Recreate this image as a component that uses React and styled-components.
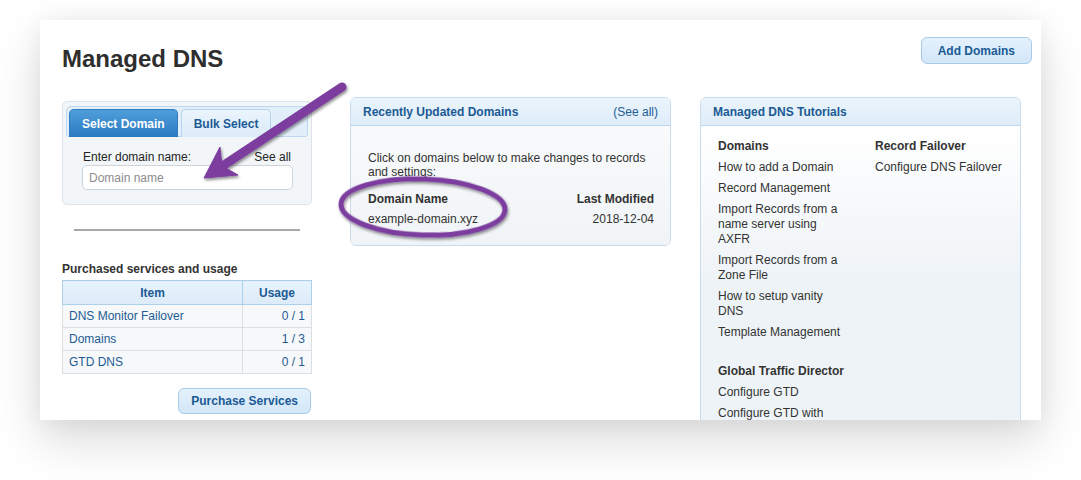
import styled, { createGlobalStyle } from "styled-components";

const GlobalStyle = createGlobalStyle`
  html, body {
    margin: 0;
    padding: 0;
    background: #ffffff;
  }
  body {
    font-family: "Liberation Sans", Arial, Helvetica, sans-serif;
    font-size: 12px;
    color: #333333;
  }
`;

const services = [
  { item: "DNS Monitor Failover", usage: "0 / 1" },
  { item: "Domains", usage: "1 / 3" },
  { item: "GTD DNS", usage: "0 / 1" },
];

const tutorialsLeft = [
  {
    title: "Domains",
    links: [
      "How to add a Domain",
      "Record Management",
      "Import Records from a name server using AXFR",
      "Import Records from a Zone File",
      "How to setup vanity DNS",
      "Template Management",
    ],
  },
  {
    title: "Global Traffic Director",
    links: ["Configure GTD", "Configure GTD with"],
  },
];

const tutorialsRight = [
  { title: "Record Failover", links: ["Configure DNS Failover"] },
];

function TutorialGroups({ groups }) {
  return groups.map((g) => (
    <TutorialGroup key={g.title}>
      <GroupTitle>{g.title}</GroupTitle>
      {g.links.map((l) => (
        <TutorialLink key={l}>{l}</TutorialLink>
      ))}
    </TutorialGroup>
  ));
}

function Annotations() {
  return (
    <Overlay viewBox="40 20 1001 400" width="1001" height="400">
      <defs>
        <filter id="shade" x="-20%" y="-20%" width="140%" height="140%">
          <feDropShadow dx="1" dy="2" stdDeviation="1.4" floodColor="#000" floodOpacity="0.45" />
        </filter>
      </defs>
      <g filter="url(#shade)" fill="#7b3d9f" stroke="#7b3d9f">
        <line x1="342" y1="87" x2="224" y2="165" strokeWidth="9" strokeLinecap="round" />
        <polygon points="204,178 220,147 222,166 238,175" strokeWidth="1" strokeLinejoin="round" />
        <ellipse
          cx="423"
          cy="207"
          rx="82"
          ry="28"
          fill="none"
          strokeWidth="5"
          transform="rotate(2 423 207)"
        />
      </g>
    </Overlay>
  );
}

export default function App() {
  return (
    <>
      <GlobalStyle />
      <Page>
        <Card>
          <HeaderRow>
            <Title>Managed DNS</Title>
            <BlueButton>Add Domains</BlueButton>
          </HeaderRow>

          <Columns>
            <LeftColumn>
              <SelectPanel>
                <TabStrip>
                  <Tab $active>Select Domain</Tab>
                  <Tab>Bulk Select</Tab>
                </TabStrip>
                <SelectBody>
                  <LabelRow>
                    <span>Enter domain name:</span>
                    <span>See all</span>
                  </LabelRow>
                  <DomainInput placeholder="Domain name" />
                </SelectBody>
              </SelectPanel>

              <Rule />

              <SectionTitle>Purchased services and usage</SectionTitle>
              <UsageTable>
                <thead>
                  <tr>
                    <HeadCell>Item</HeadCell>
                    <HeadCell $narrow>Usage</HeadCell>
                  </tr>
                </thead>
                <tbody>
                  {services.map((s) => (
                    <tr key={s.item}>
                      <BodyCell>{s.item}</BodyCell>
                      <BodyCell $right>{s.usage}</BodyCell>
                    </tr>
                  ))}
                </tbody>
              </UsageTable>
              <ButtonRow>
                <BlueButton $wide>Purchase Services</BlueButton>
              </ButtonRow>
            </LeftColumn>

            <Panel $gap="29px">
              <PanelHeader>
                <span>Recently Updated Domains</span>
                <HeaderLink>(See all)</HeaderLink>
              </PanelHeader>
              <RecentBody>
                <Intro>Click on domains below to make changes to records and settings:</Intro>
                <DomainRow $head>
                  <span>Domain Name</span>
                  <span>Last Modified</span>
                </DomainRow>
                <DomainRow>
                  <span>example-domain.xyz</span>
                  <span>2018-12-04</span>
                </DomainRow>
              </RecentBody>
            </Panel>

            <Panel $tall>
              <PanelHeader>
                <span>Managed DNS Tutorials</span>
              </PanelHeader>
              <TutorialBody>
                <TutorialColumn>
                  <TutorialGroups groups={tutorialsLeft} />
                </TutorialColumn>
                <TutorialColumn>
                  <TutorialGroups groups={tutorialsRight} />
                </TutorialColumn>
              </TutorialBody>
            </Panel>
          </Columns>

          <Annotations />
        </Card>
      </Page>
    </>
  );
}

const Page = styled.div`
  padding: 20px 40px 60px;
`;

const Card = styled.div`
  position: relative;
  box-sizing: border-box;
  width: 1001px;
  height: 400px;
  overflow: hidden;
  background: #ffffff;
  padding: 17px 0 0 22px;
  box-shadow: 0 20px 44px rgba(0, 0, 0, 0.15), 0 0 22px rgba(0, 0, 0, 0.05);
`;

const Overlay = styled.svg`
  position: absolute;
  left: 0;
  top: 0;
  pointer-events: none;
`;

const HeaderRow = styled.div`
  display: flex;
  justify-content: space-between;
  align-items: flex-start;
  padding-right: 9px;
`;

const Title = styled.h1`
  margin: 8px 0 0;
  font-size: 24px;
  line-height: 28px;
  font-weight: 700;
  color: #2e2e2e;
`;

const BlueButton = styled.button`
  box-sizing: border-box;
  height: ${(p) => (p.$wide ? "26px" : "27px")};
  padding: 0 ${(p) => (p.$wide ? "12px" : "16px")};
  border: 1px solid #a7cbe8;
  border-radius: 6px;
  background: linear-gradient(#e4f1fc, #d3e7f8);
  color: #1b5a94;
  font-family: "Liberation Sans", Arial, sans-serif;
  font-size: 12px;
  font-weight: 700;
  cursor: pointer;
`;

const Columns = styled.div`
  display: flex;
  align-items: flex-start;
  margin-top: 24px;
`;

const LeftColumn = styled.div`
  width: 250px;
  margin-right: 38px;
  padding-top: 4px;
`;

const SelectPanel = styled.div`
  box-sizing: border-box;
  height: 104px;
  padding: 4px 3px 0;
  border: 1px solid #dde3e9;
  border-radius: 5px;
  background: #f3f6f8;
`;

const TabStrip = styled.div`
  display: flex;
  gap: 3px;
  height: 31px;
  box-sizing: border-box;
  padding: 2px 0 0 2px;
  border: 1px solid #bcd7ee;
  border-radius: 5px 5px 3px 3px;
  background: #e2eef9;
`;

const Tab = styled.div`
  box-sizing: border-box;
  height: 28px;
  padding: 0 12px;
  display: flex;
  align-items: center;
  border: 1px solid ${(p) => (p.$active ? "#2f7cc1" : "#b6d4ed")};
  border-bottom: none;
  border-radius: 5px 5px 0 0;
  background: ${(p) =>
    p.$active ? "linear-gradient(#4f9edb, #2b79bf)" : "linear-gradient(#eaf4fc, #dcebf8)"};
  color: ${(p) => (p.$active ? "#ffffff" : "#1b5a94")};
  font-weight: 700;
`;

const SelectBody = styled.div`
  padding: 13px 16px 0 16px;
`;

const LabelRow = styled.div`
  display: flex;
  justify-content: space-between;
  line-height: 15px;
  padding: 0 1px;
  color: #222;
`;

const DomainInput = styled.input`
  box-sizing: border-box;
  display: block;
  width: 211px;
  height: 25px;
  margin-top: 0;
  padding: 0 6px;
  border: 1px solid #cfd4d9;
  border-radius: 5px;
  background: #ffffff;
  font-family: "Liberation Sans", Arial, sans-serif;
  font-size: 12px;
  color: #333;
  &::placeholder {
    color: #8c8c8c;
  }
`;

const Rule = styled.hr`
  margin: 24px 12px 0;
  border: none;
  border-top: 2px solid #a8a8a8;
  height: 0;
`;

const SectionTitle = styled.div`
  margin-top: 31px;
  font-weight: 700;
  line-height: 15px;
  color: #333;
`;

const UsageTable = styled.table`
  width: 250px;
  margin-top: 3px;
  border-collapse: collapse;
`;

const HeadCell = styled.th`
  box-sizing: border-box;
  height: 24px;
  width: ${(p) => (p.$narrow ? "69px" : "auto")};
  padding: 1px 0 0;
  border: 1px solid #acd0ec;
  background: linear-gradient(#e8f3fc, #dcebf8);
  color: #1b5a94;
  font-weight: 700;
  text-align: center;
`;

const BodyCell = styled.td`
  box-sizing: border-box;
  height: 23px;
  padding: 0 6px;
  border: 1px solid #dadfe4;
  background: #f6f8fa;
  color: #1f5b94;
  text-align: ${(p) => (p.$right ? "right" : "left")};
`;

const ButtonRow = styled.div`
  display: flex;
  justify-content: flex-end;
  margin-top: 14px;
  padding-right: 1px;
`;

const Panel = styled.div`
  box-sizing: border-box;
  width: 321px;
  margin-right: ${(p) => p.$gap || "0"};
  min-height: ${(p) => (p.$tall ? "360px" : "0")};
  border: 1px solid #cadcec;
  border-radius: 6px;
  overflow: hidden;
`;

const PanelHeader = styled.div`
  box-sizing: border-box;
  height: 28px;
  padding: 0 12px;
  display: flex;
  justify-content: space-between;
  align-items: center;
  border-bottom: 1px solid #bcd7ee;
  background: linear-gradient(#eaf4fc, #dfedf9);
  color: #1b5a94;
  font-weight: 700;
`;

const HeaderLink = styled.span`
  font-weight: 400;
  color: #1f5b94;
`;

const RecentBody = styled.div`
  padding: 25px 16px 16px 17px;
  background: linear-gradient(#f8fafb, #f1f4f7);
`;

const Intro = styled.p`
  margin: 0 0 10px;
  line-height: 14px;
  color: #333;
`;

const DomainRow = styled.div`
  display: flex;
  justify-content: space-between;
  height: 20px;
  line-height: 20px;
  font-weight: ${(p) => (p.$head ? 700 : 400)};
  color: #333;
`;

const TutorialBody = styled.div`
  display: grid;
  grid-template-columns: 128px 1fr;
  column-gap: 29px;
  padding: 13px 12px 0 17px;
  min-height: 400px;
  background: linear-gradient(#ffffff, #eef3f7 160px);
`;

const TutorialColumn = styled.div``;

const TutorialGroup = styled.div`
  margin-bottom: 24px;
`;

const GroupTitle = styled.div`
  font-weight: 700;
  line-height: 15px;
  margin-bottom: 6px;
  color: #333;
`;

const TutorialLink = styled.div`
  line-height: 15px;
  margin-bottom: 6px;
  color: #333;
`;
